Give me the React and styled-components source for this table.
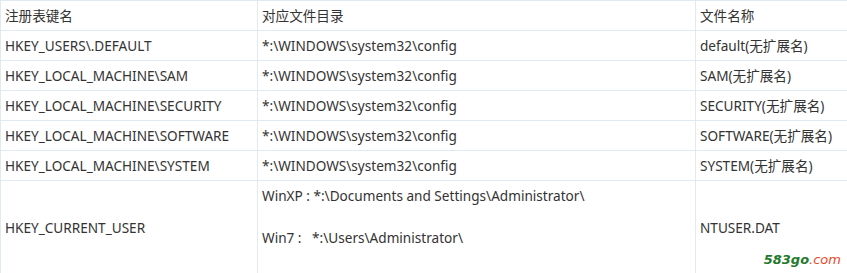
import React from 'react';
import styled, { createGlobalStyle } from 'styled-components';

const GlobalStyle = createGlobalStyle`
  body {
    margin: 0;
    background: #fff;
    overflow: hidden;
    font-family: "Noto Sans", "Noto Sans CJK SC", sans-serif;
  }
`;

const Wrap = styled.div`
  position: relative;
  width: 847px;
  height: 273px;
  overflow: hidden;
`;

const Table = styled.table`
  border-collapse: collapse;
  width: 849px;
  table-layout: fixed;
  color: #333;
  font-size: 13.6px;
`;

const Cell = styled.td`
  border: 1px solid #e1e9f3;
  padding: 0 4px;
  height: 29px;
  line-height: 29px;
  white-space: nowrap;
  vertical-align: ${(p) => (p.$top ? 'top' : 'middle')};
`;

const TallCell = styled(Cell)`
  height: 88px;
  line-height: 21px;
  padding-top: 4px;
`;

const Para = styled.div`
  line-height: 21px;
  white-space: pre;
  & + & {
    margin-top: 21px;
  }
`;

const Mark = styled.div`
  position: absolute;
  right: 6px;
  bottom: 6px;
  font-family: "DejaVu Sans", sans-serif;
  font-style: italic;
  font-weight: bold;
  font-size: 13px;
  color: #1f7a2c;
  span {
    color: #ea4a27;
    font-weight: normal;
  }
`;

const rows = [
  ['HKEY_USERS\\.DEFAULT', 'default(无扩展名)'],
  ['HKEY_LOCAL_MACHINE\\SAM', 'SAM(无扩展名)'],
  ['HKEY_LOCAL_MACHINE\\SECURITY', 'SECURITY(无扩展名)'],
  ['HKEY_LOCAL_MACHINE\\SOFTWARE', 'SOFTWARE(无扩展名)'],
  ['HKEY_LOCAL_MACHINE\\SYSTEM', 'SYSTEM(无扩展名)'],
];

const App = () => {
  return (
    <Wrap>
      <GlobalStyle />
      <Table>
        <colgroup>
          <col style={{ width: 257 }} />
          <col style={{ width: 438 }} />
          <col style={{ width: 154 }} />
        </colgroup>
        <tbody>
          <tr>
            <Cell>注册表键名</Cell>
            <Cell>对应文件目录</Cell>
            <Cell>文件名称</Cell>
          </tr>
          {rows.map((r) => (
            <tr key={r[0]}>
              <Cell>{r[0]}</Cell>
              <Cell>*:\WINDOWS\system32\config</Cell>
              <Cell>{r[1]}</Cell>
            </tr>
          ))}
          <tr>
            <Cell>HKEY_CURRENT_USER</Cell>
            <TallCell $top>
              <Para>{'WinXP : *:\\Documents and Settings\\Administrator\\'}</Para>
              <Para>{'Win7 :   *:\\Users\\Administrator\\'}</Para>
            </TallCell>
            <Cell>NTUSER.DAT</Cell>
          </tr>
        </tbody>
      </Table>
      <Mark>
        583go<span>.com</span>
      </Mark>
    </Wrap>
  );
};

export default App;
